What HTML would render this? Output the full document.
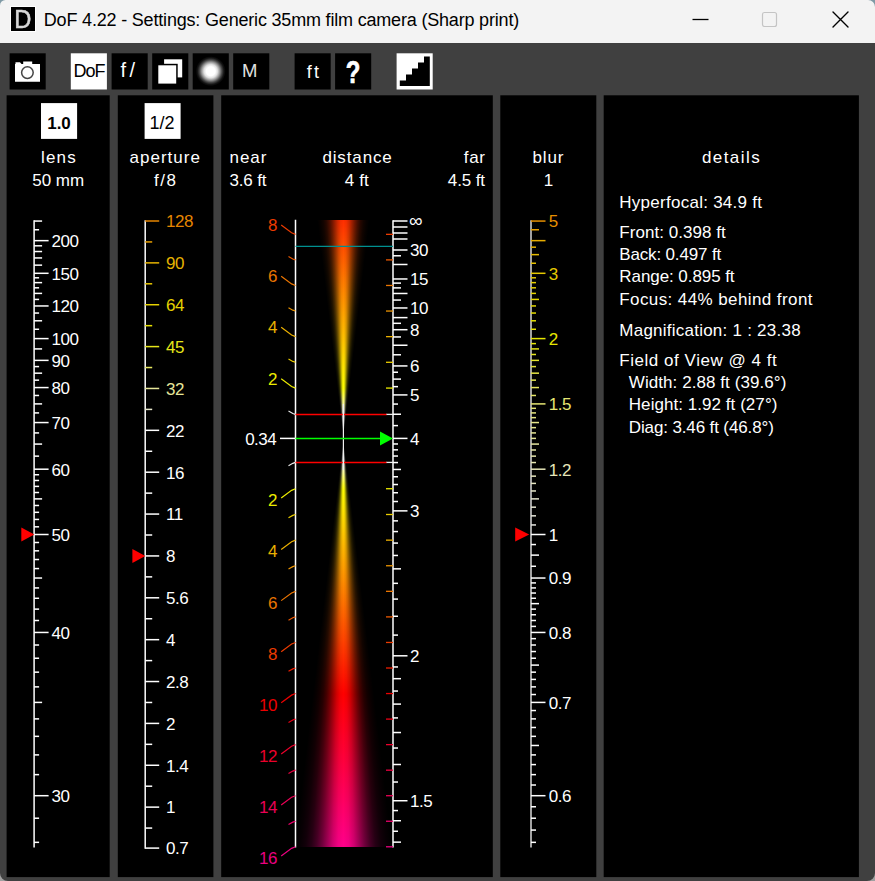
<!DOCTYPE html>
<html><head><meta charset="utf-8"><title>DoF 4.22</title>
<style>
html,body{margin:0;padding:0;background:#404040;}
body{width:875px;height:881px;overflow:hidden;position:relative;font-family:"Liberation Sans", sans-serif;}
#win{position:absolute;left:0;top:0;width:875px;height:881px;background:#404040;overflow:hidden;}
#tb{position:absolute;left:0;top:0;width:875px;height:43px;background:#f3f3f3;}
.pn{position:absolute;top:96px;height:781px;background:#000;}
.bt{position:absolute;top:53px;width:36px;height:36px;background:#000;}
#cone{position:absolute;left:296px;top:220px;width:97px;height:627px;overflow:hidden;}
#cone div{position:absolute;left:0;top:0;width:97px;height:627px;}
svg{position:absolute;left:0;top:0;}
svg text{font-family:"Liberation Sans", sans-serif;font-size:17px;}
svg text.sl{letter-spacing:-0.5px;}
</style></head><body><div id="win">
<div id="tb"></div>
<svg width="875" height="881" viewBox="0 0 875 881">
<rect x="6.6" y="95.3" width="103.1" height="781.8" fill="#000"/>
<rect x="117.8" y="95.3" width="95.6" height="781.8" fill="#000"/>
<rect x="221.2" y="95.3" width="271.6" height="781.8" fill="#000"/>
<rect x="500.3" y="95.3" width="96" height="781.8" fill="#000"/>
<rect x="603.7" y="95.3" width="255.2" height="781.8" fill="#000"/>
<rect x="9.6" y="53.3" width="36.1" height="36.2" fill="#000"/>
<rect x="70.8" y="53.3" width="36.1" height="36.2" fill="#fff"/>
<rect x="111.6" y="53.3" width="36.1" height="36.2" fill="#000"/>
<rect x="152.2" y="53.3" width="36.1" height="36.2" fill="#000"/>
<rect x="192.7" y="53.3" width="36.1" height="36.2" fill="#000"/>
<rect x="233.2" y="53.3" width="36.1" height="36.2" fill="#000"/>
<rect x="294.6" y="53.3" width="36.1" height="36.2" fill="#000"/>
<rect x="335.1" y="53.3" width="36.1" height="36.2" fill="#000"/>
<rect x="396.6" y="53.3" width="36.1" height="36.2" fill="#fff"/>
<rect x="41" y="103.1" width="36.1" height="35.8" fill="#fff"/>
<rect x="144.6" y="103.1" width="36" height="35.8" fill="#fff"/>
</svg>
<div id="cone"><div style="background:linear-gradient(to bottom,#ff2e00 0px,#ff3500 6px,#ff3d00 12px,#ff4400 18px,#ff4c00 24px,#ff5300 30px,#ff5b00 36px,#ff6200 42px,#ff6a00 48px,#ff7100 54px,#ff7900 60px,#ff8000 66px,#ff8800 72px,#ff8f00 78px,#ff9700 84px,#ff9e00 90px,#ffa600 96px,#ffad00 102px,#ffb400 108px,#ffbc00 114px,#ffc300 120px,#ffcb00 126px,#ffd200 132px,#ffda00 138px,#ffe100 144px,#ffe900 150px,#fff000 156px,#fff800 162px,#ffff00 168px,#ffff3a 174px,#ffff75 180px,#ffffaf 186px,#ffffe8 192px,#ffffff 198px,#ffffff 204px,#ffffff 210px,#ffffff 216px,#ffffff 222px,#ffffff 228px,#ffffff 234px,#ffffff 240px,#ffffdd 246px,#ffffa3 252px,#ffff69 258px,#ffff2e 264px,#fffd00 270px,#fff600 276px,#ffef00 282px,#ffe700 288px,#ffe000 294px,#ffd800 300px,#ffd100 306px,#ffc900 312px,#ffc200 318px,#ffba00 324px,#ffb300 330px,#ffac00 336px,#ffa400 342px,#ff9d00 348px,#ff9500 354px,#ff8e00 360px,#ff8600 366px,#ff7f00 372px,#ff7700 378px,#ff7000 384px,#ff6800 390px,#ff6100 396px,#ff5900 402px,#ff5200 408px,#ff4a00 414px,#ff4300 420px,#ff3b00 426px,#ff3400 432px,#ff2c00 438px,#ff2500 444px,#ff1d00 450px,#ff1600 456px,#ff0e00 462px,#ff0700 468px,#ff0000 474px,#ff0006 480px,#ff000b 486px,#ff0011 492px,#ff0016 498px,#ff001c 504px,#ff0021 510px,#ff0027 516px,#ff002c 522px,#ff0031 528px,#ff0037 534px,#ff003c 540px,#ff0042 546px,#ff0047 552px,#ff004d 558px,#ff0052 564px,#ff0058 570px,#ff005d 576px,#ff0062 582px,#ff0068 588px,#ff006d 594px,#ff0073 600px,#ff0078 606px,#ff007e 612px,#ff0083 618px,#ff0089 624px)"></div><div style="background:conic-gradient(from 0deg at 47.4px 218.4px,rgba(0,0,0,0.00) 0.00deg,rgba(0,0,0,0.05) 0.75deg,rgba(0,0,0,0.19) 1.50deg,rgba(0,0,0,0.38) 2.25deg,rgba(0,0,0,0.57) 3.00deg,rgba(0,0,0,0.73) 3.75deg,rgba(0,0,0,0.85) 4.50deg,rgba(0,0,0,0.93) 5.30deg,rgba(0,0,0,0.97) 6.00deg,rgba(0,0,0,1.00) 6.80deg,rgba(0,0,0,1) 173.20deg,rgba(0,0,0,0.97) 174.00deg,rgba(0,0,0,0.93) 174.70deg,rgba(0,0,0,0.85) 175.50deg,rgba(0,0,0,0.73) 176.25deg,rgba(0,0,0,0.57) 177.00deg,rgba(0,0,0,0.38) 177.75deg,rgba(0,0,0,0.19) 178.50deg,rgba(0,0,0,0.05) 179.25deg,rgba(0,0,0,0.00) 180.00deg,rgba(0,0,0,0.05) 180.75deg,rgba(0,0,0,0.19) 181.50deg,rgba(0,0,0,0.38) 182.25deg,rgba(0,0,0,0.57) 183.00deg,rgba(0,0,0,0.73) 183.75deg,rgba(0,0,0,0.85) 184.50deg,rgba(0,0,0,0.93) 185.30deg,rgba(0,0,0,0.97) 186.00deg,rgba(0,0,0,1.00) 186.80deg,rgba(0,0,0,1) 353.20deg,rgba(0,0,0,0.97) 354.00deg,rgba(0,0,0,0.93) 354.70deg,rgba(0,0,0,0.85) 355.50deg,rgba(0,0,0,0.73) 356.25deg,rgba(0,0,0,0.57) 357.00deg,rgba(0,0,0,0.38) 357.75deg,rgba(0,0,0,0.19) 358.50deg,rgba(0,0,0,0.05) 359.25deg,rgba(0,0,0,0.00) 360.00deg)"></div></div>
<svg width="875" height="881" viewBox="0 0 875 881">
<defs><radialGradient id="rg"><stop offset="0" stop-color="#fff"/><stop offset="0.3" stop-color="#fff"/><stop offset="0.45" stop-color="#e0e0e0"/><stop offset="0.6" stop-color="#999"/><stop offset="0.75" stop-color="#484848"/><stop offset="0.88" stop-color="#151515"/><stop offset="1" stop-color="#000"/></radialGradient>
<filter id="bl" x="-20%" y="-20%" width="140%" height="140%"><feGaussianBlur stdDeviation="0.5"/></filter></defs>
<path d="M0 0H5.5A5.5 5.5 0 0 0 0 5.5Z" fill="#7f9aa5"/>
<path d="M875 0H868A7 7 0 0 1 875 7Z" fill="#7f9aa5"/>
<path d="M0 881H8A8 8 0 0 1 0 873Z" fill="#a0a0a0"/>
<path d="M875 881H867A8 8 0 0 0 875 873Z" fill="#a0a0a0"/>
<rect x="10.5" y="6.5" width="25" height="25" fill="#000" stroke="#fff" stroke-width="1"/>
<g transform="translate(22.8 27.9) scale(0.95 1)" filter="url(#bl)"><text x="0" y="0" fill="#d8d8d8" stroke="#d8d8d8" stroke-width="0.5" text-anchor="middle" style="font-size:25px">D</text></g>
<text x="43.8" y="26.2" fill="#000" textLength="475.4" lengthAdjust="spacing" style="font-size:18px">DoF 4.22 - Settings: Generic 35mm film camera (Sharp print)</text>
<line x1="692.5" y1="19.5" x2="708.5" y2="19.5" stroke="#000" stroke-width="1.3"/>
<rect x="762.5" y="12.5" width="14" height="14" rx="2" fill="none" stroke="#c4c4c4" stroke-width="1.2"/>
<path d="M833 12L848 27M848 12L833 27" stroke="#000" stroke-width="1.4" fill="none" stroke-linecap="round"/>
<path d="M15 64H20L22 64H23.2V61.5H32.2V64H40V81.7H15Z" fill="#fff"/>
<path d="M15.5 62.3H20L21.5 64H15.5Z" fill="#fff"/>
<circle cx="27.4" cy="72.6" r="5.8" fill="#fff" stroke="#444" stroke-width="1.5"/>
<text x="89.5" y="77" fill="#000" text-anchor="middle" textLength="32" lengthAdjust="spacing" style="font-size:18px">DoF</text>
<text x="120.6" y="77" fill="#fff" textLength="14.4" lengthAdjust="spacing" style="font-size:20px">f/</text>
<rect x="164.1" y="59.3" width="18.1" height="18.1" fill="#fff"/>
<rect x="156.8" y="63.8" width="20.9" height="21.3" fill="#000"/>
<rect x="158.3" y="65.3" width="17.9" height="18.3" fill="#fff"/>
<circle cx="210.7" cy="71.2" r="15" fill="url(#rg)"/>
<text x="249.6" y="77.3" fill="#e0e0e0" text-anchor="middle" style="font-size:18.5px">M</text>
<text x="306.7" y="78" fill="#fff" textLength="12.3" lengthAdjust="spacing" style="font-size:18px">ft</text>
<g transform="translate(353 83.2) scale(0.76 1)"><text x="0" y="0" fill="#fff" stroke="#fff" stroke-width="0.7" text-anchor="middle" font-weight="bold" style="font-size:31.5px">?</text></g>
<path d="M399.8 86V80.5H406V74.5H412V68.5H418V62.5H424V56.5H429.8V86Z" fill="#000"/>
<text x="59" y="128.5" fill="#000" text-anchor="middle" font-weight="bold">1.0</text>
<text x="162" y="128.5" fill="#000" text-anchor="middle" style="font-size:18px">1/2</text>
<text x="58.3" y="162.7" fill="#ffffff" text-anchor="middle" textLength="34.8" lengthAdjust="spacing">lens</text>
<text x="58.2" y="185.7" fill="#ffffff" text-anchor="middle" textLength="51.8" lengthAdjust="spacing">50 mm</text>
<text x="164.7" y="162.7" fill="#ffffff" text-anchor="middle" textLength="70.4" lengthAdjust="spacing">aperture</text>
<text x="165" y="185.7" fill="#ffffff" text-anchor="middle" textLength="22" lengthAdjust="spacing">f/8</text>
<text x="229.6" y="162.7" fill="#ffffff" textLength="36.8" lengthAdjust="spacing">near</text>
<text x="229.6" y="185.7" fill="#ffffff" textLength="36.8" lengthAdjust="spacing">3.6 ft</text>
<text x="357.1" y="162.7" fill="#ffffff" text-anchor="middle" textLength="69.4" lengthAdjust="spacing">distance</text>
<text x="356.8" y="185.7" fill="#ffffff" text-anchor="middle" textLength="24" lengthAdjust="spacing">4 ft</text>
<text x="485" y="162.7" fill="#ffffff" text-anchor="end" textLength="21.2" lengthAdjust="spacing">far</text>
<text x="485" y="185.7" fill="#ffffff" text-anchor="end" textLength="37.2" lengthAdjust="spacing">4.5 ft</text>
<text x="548" y="162.7" fill="#ffffff" text-anchor="middle" textLength="30.8" lengthAdjust="spacing">blur</text>
<text x="548.4" y="185.7" fill="#ffffff" text-anchor="middle">1</text>
<text x="730.8" y="162.7" fill="#ffffff" text-anchor="middle" textLength="57.7" lengthAdjust="spacing">details</text>
<text x="619.3" y="208.4" fill="#ffffff" textLength="142.7" lengthAdjust="spacing">Hyperfocal: 34.9 ft</text>
<text x="619.3" y="237.5" fill="#ffffff" textLength="106.4" lengthAdjust="spacing">Front: 0.398 ft</text>
<text x="619.3" y="259.8" fill="#ffffff" textLength="101.9" lengthAdjust="spacing">Back: 0.497 ft</text>
<text x="619.3" y="282" fill="#ffffff" textLength="115.3" lengthAdjust="spacing">Range: 0.895 ft</text>
<text x="619.3" y="305.3" fill="#ffffff" textLength="193.2" lengthAdjust="spacing">Focus: 44% behind front</text>
<text x="619.3" y="335.6" fill="#ffffff" textLength="181.3" lengthAdjust="spacing">Magnification: 1 : 23.38</text>
<text x="619.3" y="365.6" fill="#ffffff" textLength="157.5" lengthAdjust="spacing">Field of View @ 4 ft</text>
<text x="628.8" y="387.6" fill="#ffffff" textLength="157.5" lengthAdjust="spacing">Width: 2.88 ft (39.6°)</text>
<text x="628.8" y="409.9" fill="#ffffff" textLength="148.6" lengthAdjust="spacing">Height: 1.92 ft (27°)</text>
<text x="628.8" y="432.5" fill="#ffffff" textLength="145" lengthAdjust="spacing">Diag: 3.46 ft (46.8°)</text>
<line x1="34.1" y1="220.25" x2="34.1" y2="847.5" stroke="#ffffff" stroke-width="1.5"/>
<line x1="34.1" y1="221.06" x2="42.1" y2="221.06" stroke="#ffffff" stroke-width="1.5"/>
<line x1="34.1" y1="229.77" x2="39.1" y2="229.77" stroke="#ffffff" stroke-width="1.5"/>
<line x1="34.1" y1="273.3" x2="48.6" y2="273.3" stroke="#ffffff" stroke-width="1.5"/>
<line x1="34.1" y1="265.14" x2="42.1" y2="265.14" stroke="#ffffff" stroke-width="1.5"/>
<line x1="34.1" y1="257.94" x2="42.1" y2="257.94" stroke="#ffffff" stroke-width="1.5"/>
<line x1="34.1" y1="251.53" x2="42.1" y2="251.53" stroke="#ffffff" stroke-width="1.5"/>
<line x1="34.1" y1="245.81" x2="42.1" y2="245.81" stroke="#ffffff" stroke-width="1.5"/>
<line x1="34.1" y1="240.65" x2="48.6" y2="240.65" stroke="#ffffff" stroke-width="1.5"/>
<line x1="34.1" y1="360.37" x2="48.6" y2="360.37" stroke="#ffffff" stroke-width="1.5"/>
<line x1="34.1" y1="348.91" x2="42.1" y2="348.91" stroke="#ffffff" stroke-width="1.5"/>
<line x1="34.1" y1="338.6" x2="48.6" y2="338.6" stroke="#ffffff" stroke-width="1.5"/>
<line x1="34.1" y1="329.27" x2="39.1" y2="329.27" stroke="#ffffff" stroke-width="1.5"/>
<line x1="34.1" y1="320.79" x2="42.1" y2="320.79" stroke="#ffffff" stroke-width="1.5"/>
<line x1="34.1" y1="313.05" x2="39.1" y2="313.05" stroke="#ffffff" stroke-width="1.5"/>
<line x1="34.1" y1="305.95" x2="48.6" y2="305.95" stroke="#ffffff" stroke-width="1.5"/>
<line x1="34.1" y1="299.42" x2="39.1" y2="299.42" stroke="#ffffff" stroke-width="1.5"/>
<line x1="34.1" y1="293.39" x2="42.1" y2="293.39" stroke="#ffffff" stroke-width="1.5"/>
<line x1="34.1" y1="287.81" x2="39.1" y2="287.81" stroke="#ffffff" stroke-width="1.5"/>
<line x1="34.1" y1="282.63" x2="42.1" y2="282.63" stroke="#ffffff" stroke-width="1.5"/>
<line x1="34.1" y1="277.8" x2="39.1" y2="277.8" stroke="#ffffff" stroke-width="1.5"/>
<line x1="34.1" y1="469.2" x2="48.6" y2="469.2" stroke="#ffffff" stroke-width="1.5"/>
<line x1="34.1" y1="456.14" x2="39.1" y2="456.14" stroke="#ffffff" stroke-width="1.5"/>
<line x1="34.1" y1="444.08" x2="42.1" y2="444.08" stroke="#ffffff" stroke-width="1.5"/>
<line x1="34.1" y1="432.92" x2="39.1" y2="432.92" stroke="#ffffff" stroke-width="1.5"/>
<line x1="34.1" y1="422.56" x2="48.6" y2="422.56" stroke="#ffffff" stroke-width="1.5"/>
<line x1="34.1" y1="412.91" x2="39.1" y2="412.91" stroke="#ffffff" stroke-width="1.5"/>
<line x1="34.1" y1="403.9" x2="42.1" y2="403.9" stroke="#ffffff" stroke-width="1.5"/>
<line x1="34.1" y1="395.47" x2="39.1" y2="395.47" stroke="#ffffff" stroke-width="1.5"/>
<line x1="34.1" y1="387.57" x2="48.6" y2="387.57" stroke="#ffffff" stroke-width="1.5"/>
<line x1="34.1" y1="380.15" x2="39.1" y2="380.15" stroke="#ffffff" stroke-width="1.5"/>
<line x1="34.1" y1="373.17" x2="42.1" y2="373.17" stroke="#ffffff" stroke-width="1.5"/>
<line x1="34.1" y1="366.59" x2="39.1" y2="366.59" stroke="#ffffff" stroke-width="1.5"/>
<line x1="34.1" y1="842.34" x2="39.1" y2="842.34" stroke="#ffffff" stroke-width="1.5"/>
<line x1="34.1" y1="818.22" x2="39.1" y2="818.22" stroke="#ffffff" stroke-width="1.5"/>
<line x1="34.1" y1="795.7" x2="48.6" y2="795.7" stroke="#ffffff" stroke-width="1.5"/>
<line x1="34.1" y1="774.64" x2="39.1" y2="774.64" stroke="#ffffff" stroke-width="1.5"/>
<line x1="34.1" y1="754.89" x2="39.1" y2="754.89" stroke="#ffffff" stroke-width="1.5"/>
<line x1="34.1" y1="736.34" x2="39.1" y2="736.34" stroke="#ffffff" stroke-width="1.5"/>
<line x1="34.1" y1="718.88" x2="39.1" y2="718.88" stroke="#ffffff" stroke-width="1.5"/>
<line x1="34.1" y1="702.41" x2="42.1" y2="702.41" stroke="#ffffff" stroke-width="1.5"/>
<line x1="34.1" y1="686.87" x2="39.1" y2="686.87" stroke="#ffffff" stroke-width="1.5"/>
<line x1="34.1" y1="672.16" x2="39.1" y2="672.16" stroke="#ffffff" stroke-width="1.5"/>
<line x1="34.1" y1="658.23" x2="39.1" y2="658.23" stroke="#ffffff" stroke-width="1.5"/>
<line x1="34.1" y1="645.01" x2="39.1" y2="645.01" stroke="#ffffff" stroke-width="1.5"/>
<line x1="34.1" y1="632.45" x2="48.6" y2="632.45" stroke="#ffffff" stroke-width="1.5"/>
<line x1="34.1" y1="620.5" x2="39.1" y2="620.5" stroke="#ffffff" stroke-width="1.5"/>
<line x1="34.1" y1="609.13" x2="39.1" y2="609.13" stroke="#ffffff" stroke-width="1.5"/>
<line x1="34.1" y1="598.28" x2="39.1" y2="598.28" stroke="#ffffff" stroke-width="1.5"/>
<line x1="34.1" y1="587.93" x2="39.1" y2="587.93" stroke="#ffffff" stroke-width="1.5"/>
<line x1="34.1" y1="578.03" x2="42.1" y2="578.03" stroke="#ffffff" stroke-width="1.5"/>
<line x1="34.1" y1="568.57" x2="39.1" y2="568.57" stroke="#ffffff" stroke-width="1.5"/>
<line x1="34.1" y1="559.51" x2="39.1" y2="559.51" stroke="#ffffff" stroke-width="1.5"/>
<line x1="34.1" y1="550.83" x2="39.1" y2="550.83" stroke="#ffffff" stroke-width="1.5"/>
<line x1="34.1" y1="542.5" x2="39.1" y2="542.5" stroke="#ffffff" stroke-width="1.5"/>
<line x1="34.1" y1="534.5" x2="48.6" y2="534.5" stroke="#ffffff" stroke-width="1.5"/>
<line x1="34.1" y1="526.82" x2="39.1" y2="526.82" stroke="#ffffff" stroke-width="1.5"/>
<line x1="34.1" y1="519.43" x2="39.1" y2="519.43" stroke="#ffffff" stroke-width="1.5"/>
<line x1="34.1" y1="512.32" x2="39.1" y2="512.32" stroke="#ffffff" stroke-width="1.5"/>
<line x1="34.1" y1="505.48" x2="39.1" y2="505.48" stroke="#ffffff" stroke-width="1.5"/>
<line x1="34.1" y1="498.88" x2="42.1" y2="498.88" stroke="#ffffff" stroke-width="1.5"/>
<line x1="34.1" y1="492.52" x2="39.1" y2="492.52" stroke="#ffffff" stroke-width="1.5"/>
<line x1="34.1" y1="486.38" x2="39.1" y2="486.38" stroke="#ffffff" stroke-width="1.5"/>
<line x1="34.1" y1="480.46" x2="39.1" y2="480.46" stroke="#ffffff" stroke-width="1.5"/>
<line x1="34.1" y1="474.73" x2="39.1" y2="474.73" stroke="#ffffff" stroke-width="1.5"/>
<text x="51.5" y="246.95" fill="#ffffff" class="sl">200</text>
<text x="51.5" y="279.6" fill="#ffffff" class="sl">150</text>
<text x="51.5" y="312.25" fill="#ffffff" class="sl">120</text>
<text x="51.5" y="344.9" fill="#ffffff" class="sl">100</text>
<text x="51.5" y="366.67" fill="#ffffff" class="sl">90</text>
<text x="51.5" y="393.88" fill="#ffffff" class="sl">80</text>
<text x="51.5" y="428.86" fill="#ffffff" class="sl">70</text>
<text x="51.5" y="475.5" fill="#ffffff" class="sl">60</text>
<text x="51.5" y="540.8" fill="#ffffff" class="sl">50</text>
<text x="51.5" y="638.75" fill="#ffffff" class="sl">40</text>
<text x="51.5" y="802" fill="#ffffff" class="sl">30</text>
<path d="M21.3 527.6L34.3 534.5L21.3 541.4Z" fill="#f00"/>
<line x1="145.2" y1="220.25" x2="145.2" y2="848.8" stroke="#ffffff" stroke-width="1.5"/>
<line x1="145.2" y1="221" x2="159.2" y2="221" stroke="#e68600" stroke-width="1.5"/>
<text x="166" y="227.3" fill="#e68600" class="sl">128</text>
<line x1="145.2" y1="241.93" x2="152.2" y2="241.93" stroke="#e69e00" stroke-width="1.5"/>
<line x1="145.2" y1="262.87" x2="159.2" y2="262.87" stroke="#e6b300" stroke-width="1.5"/>
<text x="166" y="269.17" fill="#e6b300" class="sl">90</text>
<line x1="145.2" y1="283.8" x2="152.2" y2="283.8" stroke="#e6c400" stroke-width="1.5"/>
<line x1="145.2" y1="304.73" x2="159.2" y2="304.73" stroke="#e6d200" stroke-width="1.5"/>
<text x="166" y="311.03" fill="#e6d200" class="sl">64</text>
<line x1="145.2" y1="325.67" x2="152.2" y2="325.67" stroke="#e6df00" stroke-width="1.5"/>
<line x1="145.2" y1="346.6" x2="159.2" y2="346.6" stroke="#e6e61a" stroke-width="1.5"/>
<text x="166" y="352.9" fill="#e6e61a" class="sl">45</text>
<line x1="145.2" y1="367.53" x2="152.2" y2="367.53" stroke="#e6e65f" stroke-width="1.5"/>
<line x1="145.2" y1="388.47" x2="159.2" y2="388.47" stroke="#e6e699" stroke-width="1.5"/>
<text x="166" y="394.77" fill="#e6e699" class="sl">32</text>
<line x1="145.2" y1="409.4" x2="152.2" y2="409.4" stroke="#e6e6ca" stroke-width="1.5"/>
<line x1="145.2" y1="430.33" x2="159.2" y2="430.33" stroke="#ffffff" stroke-width="1.5"/>
<text x="166" y="436.63" fill="#ffffff" class="sl">22</text>
<line x1="145.2" y1="451.27" x2="152.2" y2="451.27" stroke="#ffffff" stroke-width="1.5"/>
<line x1="145.2" y1="472.2" x2="159.2" y2="472.2" stroke="#ffffff" stroke-width="1.5"/>
<text x="166" y="478.5" fill="#ffffff" class="sl">16</text>
<line x1="145.2" y1="493.13" x2="152.2" y2="493.13" stroke="#ffffff" stroke-width="1.5"/>
<line x1="145.2" y1="514.07" x2="159.2" y2="514.07" stroke="#ffffff" stroke-width="1.5"/>
<text x="166" y="520.37" fill="#ffffff" class="sl">11</text>
<line x1="145.2" y1="535" x2="152.2" y2="535" stroke="#ffffff" stroke-width="1.5"/>
<line x1="145.2" y1="555.93" x2="159.2" y2="555.93" stroke="#ffffff" stroke-width="1.5"/>
<text x="166" y="562.23" fill="#ffffff" class="sl">8</text>
<line x1="145.2" y1="576.87" x2="152.2" y2="576.87" stroke="#ffffff" stroke-width="1.5"/>
<line x1="145.2" y1="597.8" x2="159.2" y2="597.8" stroke="#ffffff" stroke-width="1.5"/>
<text x="166" y="604.1" fill="#ffffff" class="sl">5.6</text>
<line x1="145.2" y1="618.73" x2="152.2" y2="618.73" stroke="#ffffff" stroke-width="1.5"/>
<line x1="145.2" y1="639.67" x2="159.2" y2="639.67" stroke="#ffffff" stroke-width="1.5"/>
<text x="166" y="645.97" fill="#ffffff" class="sl">4</text>
<line x1="145.2" y1="660.6" x2="152.2" y2="660.6" stroke="#ffffff" stroke-width="1.5"/>
<line x1="145.2" y1="681.53" x2="159.2" y2="681.53" stroke="#ffffff" stroke-width="1.5"/>
<text x="166" y="687.83" fill="#ffffff" class="sl">2.8</text>
<line x1="145.2" y1="702.47" x2="152.2" y2="702.47" stroke="#ffffff" stroke-width="1.5"/>
<line x1="145.2" y1="723.4" x2="159.2" y2="723.4" stroke="#ffffff" stroke-width="1.5"/>
<text x="166" y="729.7" fill="#ffffff" class="sl">2</text>
<line x1="145.2" y1="744.33" x2="152.2" y2="744.33" stroke="#ffffff" stroke-width="1.5"/>
<line x1="145.2" y1="765.27" x2="159.2" y2="765.27" stroke="#ffffff" stroke-width="1.5"/>
<text x="166" y="771.57" fill="#ffffff" class="sl">1.4</text>
<line x1="145.2" y1="786.2" x2="152.2" y2="786.2" stroke="#ffffff" stroke-width="1.5"/>
<line x1="145.2" y1="807.13" x2="159.2" y2="807.13" stroke="#ffffff" stroke-width="1.5"/>
<text x="166" y="813.43" fill="#ffffff" class="sl">1</text>
<line x1="145.2" y1="828.07" x2="152.2" y2="828.07" stroke="#ffffff" stroke-width="1.5"/>
<line x1="145.2" y1="848.1" x2="159.2" y2="848.1" stroke="#ffffff" stroke-width="1.5"/>
<text x="166" y="854.4" fill="#ffffff" class="sl">0.7</text>
<path d="M132.4 549.1L145.3 556L132.4 562.9Z" fill="#f00"/>
<line x1="531" y1="220.25" x2="531" y2="847.5" stroke="#d8d8d8" stroke-width="1.5"/>
<line x1="531" y1="229.77" x2="539" y2="229.77" stroke="#e69e00" stroke-width="1.5"/>
<line x1="531" y1="247.18" x2="536" y2="247.18" stroke="#e6b300" stroke-width="1.5"/>
<line x1="531" y1="254.64" x2="539" y2="254.64" stroke="#e6ba00" stroke-width="1.5"/>
<line x1="531" y1="263.25" x2="536" y2="263.25" stroke="#e6c200" stroke-width="1.5"/>
<line x1="531" y1="240.65" x2="545.5" y2="240.65" stroke="#e6ac00" stroke-width="1.5"/>
<line x1="531" y1="338.6" x2="545.5" y2="338.6" stroke="#e6e600" stroke-width="1.5"/>
<line x1="531" y1="329.27" x2="536" y2="329.27" stroke="#e6e300" stroke-width="1.5"/>
<line x1="531" y1="320.79" x2="536" y2="320.79" stroke="#e6e000" stroke-width="1.5"/>
<line x1="531" y1="313.05" x2="536" y2="313.05" stroke="#e6dd00" stroke-width="1.5"/>
<line x1="531" y1="305.95" x2="536" y2="305.95" stroke="#e6da00" stroke-width="1.5"/>
<line x1="531" y1="299.42" x2="539" y2="299.42" stroke="#e6d700" stroke-width="1.5"/>
<line x1="531" y1="293.39" x2="536" y2="293.39" stroke="#e6d400" stroke-width="1.5"/>
<line x1="531" y1="287.81" x2="536" y2="287.81" stroke="#e6d100" stroke-width="1.5"/>
<line x1="531" y1="282.63" x2="536" y2="282.63" stroke="#e6cf00" stroke-width="1.5"/>
<line x1="531" y1="277.8" x2="536" y2="277.8" stroke="#e6cc00" stroke-width="1.5"/>
<line x1="531" y1="273.3" x2="545.5" y2="273.3" stroke="#e6c900" stroke-width="1.5"/>
<line x1="531" y1="403.9" x2="545.5" y2="403.9" stroke="#e6e673" stroke-width="1.5"/>
<line x1="531" y1="395.47" x2="536" y2="395.47" stroke="#e6e667" stroke-width="1.5"/>
<line x1="531" y1="387.57" x2="539" y2="387.57" stroke="#e6e65c" stroke-width="1.5"/>
<line x1="531" y1="380.15" x2="536" y2="380.15" stroke="#e6e650" stroke-width="1.5"/>
<line x1="531" y1="373.17" x2="539" y2="373.17" stroke="#e6e645" stroke-width="1.5"/>
<line x1="531" y1="366.59" x2="536" y2="366.59" stroke="#e6e639" stroke-width="1.5"/>
<line x1="531" y1="360.37" x2="539" y2="360.37" stroke="#e6e62e" stroke-width="1.5"/>
<line x1="531" y1="354.48" x2="536" y2="354.48" stroke="#e6e622" stroke-width="1.5"/>
<line x1="531" y1="348.91" x2="539" y2="348.91" stroke="#e6e617" stroke-width="1.5"/>
<line x1="531" y1="343.62" x2="536" y2="343.62" stroke="#e6e60b" stroke-width="1.5"/>
<line x1="531" y1="534.5" x2="545.5" y2="534.5" stroke="#ffffff" stroke-width="1.5"/>
<line x1="531" y1="524.94" x2="536" y2="524.94" stroke="#e6e6e0" stroke-width="1.5"/>
<line x1="531" y1="515.84" x2="536" y2="515.84" stroke="#e6e6da" stroke-width="1.5"/>
<line x1="531" y1="507.17" x2="536" y2="507.17" stroke="#e6e6d4" stroke-width="1.5"/>
<line x1="531" y1="498.88" x2="539" y2="498.88" stroke="#e6e6cf" stroke-width="1.5"/>
<line x1="531" y1="490.97" x2="536" y2="490.97" stroke="#e6e6c9" stroke-width="1.5"/>
<line x1="531" y1="483.4" x2="536" y2="483.4" stroke="#e6e6c3" stroke-width="1.5"/>
<line x1="531" y1="476.15" x2="536" y2="476.15" stroke="#e6e6bd" stroke-width="1.5"/>
<line x1="531" y1="469.2" x2="545.5" y2="469.2" stroke="#e6e6b8" stroke-width="1.5"/>
<line x1="531" y1="462.54" x2="536" y2="462.54" stroke="#e6e6b2" stroke-width="1.5"/>
<line x1="531" y1="456.14" x2="536" y2="456.14" stroke="#e6e6ac" stroke-width="1.5"/>
<line x1="531" y1="449.99" x2="536" y2="449.99" stroke="#e6e6a6" stroke-width="1.5"/>
<line x1="531" y1="444.08" x2="539" y2="444.08" stroke="#e6e6a1" stroke-width="1.5"/>
<line x1="531" y1="438.4" x2="536" y2="438.4" stroke="#e6e69b" stroke-width="1.5"/>
<line x1="531" y1="432.92" x2="536" y2="432.92" stroke="#e6e695" stroke-width="1.5"/>
<line x1="531" y1="427.65" x2="536" y2="427.65" stroke="#e6e68f" stroke-width="1.5"/>
<line x1="531" y1="422.56" x2="539" y2="422.56" stroke="#e6e68a" stroke-width="1.5"/>
<line x1="531" y1="417.65" x2="536" y2="417.65" stroke="#e6e684" stroke-width="1.5"/>
<line x1="531" y1="412.91" x2="536" y2="412.91" stroke="#e6e67e" stroke-width="1.5"/>
<line x1="531" y1="408.33" x2="536" y2="408.33" stroke="#e6e678" stroke-width="1.5"/>
<line x1="531" y1="578.03" x2="545.5" y2="578.03" stroke="#ffffff" stroke-width="1.5"/>
<line x1="531" y1="566.27" x2="536" y2="566.27" stroke="#ffffff" stroke-width="1.5"/>
<line x1="531" y1="555.12" x2="539" y2="555.12" stroke="#ffffff" stroke-width="1.5"/>
<line x1="531" y1="544.55" x2="536" y2="544.55" stroke="#ffffff" stroke-width="1.5"/>
<line x1="531" y1="842.34" x2="536" y2="842.34" stroke="#ffffff" stroke-width="1.5"/>
<line x1="531" y1="830.07" x2="536" y2="830.07" stroke="#ffffff" stroke-width="1.5"/>
<line x1="531" y1="818.22" x2="536" y2="818.22" stroke="#ffffff" stroke-width="1.5"/>
<line x1="531" y1="806.77" x2="536" y2="806.77" stroke="#ffffff" stroke-width="1.5"/>
<line x1="531" y1="795.7" x2="545.5" y2="795.7" stroke="#ffffff" stroke-width="1.5"/>
<line x1="531" y1="785" x2="536" y2="785" stroke="#ffffff" stroke-width="1.5"/>
<line x1="531" y1="774.64" x2="536" y2="774.64" stroke="#ffffff" stroke-width="1.5"/>
<line x1="531" y1="764.6" x2="536" y2="764.6" stroke="#ffffff" stroke-width="1.5"/>
<line x1="531" y1="754.89" x2="536" y2="754.89" stroke="#ffffff" stroke-width="1.5"/>
<line x1="531" y1="745.47" x2="539" y2="745.47" stroke="#ffffff" stroke-width="1.5"/>
<line x1="531" y1="736.34" x2="536" y2="736.34" stroke="#ffffff" stroke-width="1.5"/>
<line x1="531" y1="727.48" x2="536" y2="727.48" stroke="#ffffff" stroke-width="1.5"/>
<line x1="531" y1="718.88" x2="536" y2="718.88" stroke="#ffffff" stroke-width="1.5"/>
<line x1="531" y1="710.53" x2="536" y2="710.53" stroke="#ffffff" stroke-width="1.5"/>
<line x1="531" y1="702.41" x2="545.5" y2="702.41" stroke="#ffffff" stroke-width="1.5"/>
<line x1="531" y1="694.53" x2="536" y2="694.53" stroke="#ffffff" stroke-width="1.5"/>
<line x1="531" y1="686.87" x2="536" y2="686.87" stroke="#ffffff" stroke-width="1.5"/>
<line x1="531" y1="679.41" x2="536" y2="679.41" stroke="#ffffff" stroke-width="1.5"/>
<line x1="531" y1="672.16" x2="536" y2="672.16" stroke="#ffffff" stroke-width="1.5"/>
<line x1="531" y1="665.1" x2="539" y2="665.1" stroke="#ffffff" stroke-width="1.5"/>
<line x1="531" y1="658.23" x2="536" y2="658.23" stroke="#ffffff" stroke-width="1.5"/>
<line x1="531" y1="651.53" x2="536" y2="651.53" stroke="#ffffff" stroke-width="1.5"/>
<line x1="531" y1="645.01" x2="536" y2="645.01" stroke="#ffffff" stroke-width="1.5"/>
<line x1="531" y1="638.65" x2="536" y2="638.65" stroke="#ffffff" stroke-width="1.5"/>
<line x1="531" y1="632.45" x2="545.5" y2="632.45" stroke="#ffffff" stroke-width="1.5"/>
<line x1="531" y1="626.4" x2="536" y2="626.4" stroke="#ffffff" stroke-width="1.5"/>
<line x1="531" y1="620.5" x2="536" y2="620.5" stroke="#ffffff" stroke-width="1.5"/>
<line x1="531" y1="614.75" x2="536" y2="614.75" stroke="#ffffff" stroke-width="1.5"/>
<line x1="531" y1="609.13" x2="536" y2="609.13" stroke="#ffffff" stroke-width="1.5"/>
<line x1="531" y1="603.64" x2="539" y2="603.64" stroke="#ffffff" stroke-width="1.5"/>
<line x1="531" y1="598.28" x2="536" y2="598.28" stroke="#ffffff" stroke-width="1.5"/>
<line x1="531" y1="593.04" x2="536" y2="593.04" stroke="#ffffff" stroke-width="1.5"/>
<line x1="531" y1="587.93" x2="536" y2="587.93" stroke="#ffffff" stroke-width="1.5"/>
<line x1="531" y1="582.92" x2="536" y2="582.92" stroke="#ffffff" stroke-width="1.5"/>
<line x1="531" y1="221.06" x2="545.5" y2="221.06" stroke="#e68f00" stroke-width="1.5"/>
<text x="548.8" y="227.36" fill="#e68f00" class="sl">5</text>
<text x="548.8" y="279.6" fill="#e6c900" class="sl">3</text>
<text x="548.8" y="344.9" fill="#e6e600" class="sl">2</text>
<text x="548.8" y="410.2" fill="#e6e673" class="sl">1.5</text>
<text x="548.8" y="475.5" fill="#e6e6b8" class="sl">1.2</text>
<text x="548.8" y="540.8" fill="#ffffff" class="sl">1</text>
<text x="548.8" y="584.33" fill="#ffffff" class="sl">0.9</text>
<text x="548.8" y="638.75" fill="#ffffff" class="sl">0.8</text>
<text x="548.8" y="708.71" fill="#ffffff" class="sl">0.7</text>
<text x="548.8" y="802" fill="#ffffff" class="sl">0.6</text>
<path d="M515.2 527.6L529.2 534.5L515.2 541.4Z" fill="#f00"/>
<line x1="393" y1="220.25" x2="393" y2="847.5" stroke="#ffffff" stroke-width="1.5"/>
<line x1="393" y1="221" x2="407.5" y2="221" stroke="#ffffff" stroke-width="1.5"/>
<line x1="393" y1="227" x2="407.5" y2="227" stroke="#ffffff" stroke-width="1.5"/>
<line x1="393" y1="233" x2="407.5" y2="233" stroke="#ffffff" stroke-width="1.5"/>
<line x1="393" y1="239" x2="407.5" y2="239" stroke="#ffffff" stroke-width="1.5"/>
<line x1="393" y1="249.99" x2="407.5" y2="249.99" stroke="#ffffff" stroke-width="1.5"/>
<line x1="393" y1="264.48" x2="407.5" y2="264.48" stroke="#ffffff" stroke-width="1.5"/>
<line x1="393" y1="278.97" x2="407.5" y2="278.97" stroke="#ffffff" stroke-width="1.5"/>
<line x1="393" y1="293.47" x2="407.5" y2="293.47" stroke="#ffffff" stroke-width="1.5"/>
<line x1="393" y1="307.96" x2="407.5" y2="307.96" stroke="#ffffff" stroke-width="1.5"/>
<line x1="393" y1="317.62" x2="407.5" y2="317.62" stroke="#ffffff" stroke-width="1.5"/>
<line x1="393" y1="329.7" x2="407.5" y2="329.7" stroke="#ffffff" stroke-width="1.5"/>
<line x1="393" y1="345.23" x2="407.5" y2="345.23" stroke="#ffffff" stroke-width="1.5"/>
<line x1="393" y1="365.93" x2="407.5" y2="365.93" stroke="#ffffff" stroke-width="1.5"/>
<line x1="393" y1="394.92" x2="407.5" y2="394.92" stroke="#ffffff" stroke-width="1.5"/>
<line x1="393" y1="438.4" x2="407.5" y2="438.4" stroke="#ffffff" stroke-width="1.5"/>
<line x1="393" y1="510.87" x2="407.5" y2="510.87" stroke="#ffffff" stroke-width="1.5"/>
<line x1="393" y1="655.8" x2="407.5" y2="655.8" stroke="#ffffff" stroke-width="1.5"/>
<line x1="393" y1="800.73" x2="407.5" y2="800.73" stroke="#ffffff" stroke-width="1.5"/>
<line x1="393" y1="255.78" x2="401" y2="255.78" stroke="#ffffff" stroke-width="1.5"/>
<line x1="393" y1="283.11" x2="401" y2="283.11" stroke="#ffffff" stroke-width="1.5"/>
<line x1="393" y1="287.89" x2="401" y2="287.89" stroke="#ffffff" stroke-width="1.5"/>
<line x1="393" y1="300.05" x2="401" y2="300.05" stroke="#ffffff" stroke-width="1.5"/>
<line x1="393" y1="323.31" x2="401" y2="323.31" stroke="#ffffff" stroke-width="1.5"/>
<line x1="393" y1="336.95" x2="401" y2="336.95" stroke="#ffffff" stroke-width="1.5"/>
<line x1="393" y1="354.78" x2="401" y2="354.78" stroke="#ffffff" stroke-width="1.5"/>
<line x1="393" y1="425.61" x2="398" y2="425.61" stroke="#ffffff" stroke-width="1.5"/>
<line x1="393" y1="414.24" x2="401" y2="414.24" stroke="#ffffff" stroke-width="1.5"/>
<line x1="393" y1="404.07" x2="398" y2="404.07" stroke="#ffffff" stroke-width="1.5"/>
<line x1="393" y1="386.64" x2="398" y2="386.64" stroke="#ffffff" stroke-width="1.5"/>
<line x1="393" y1="379.11" x2="401" y2="379.11" stroke="#ffffff" stroke-width="1.5"/>
<line x1="393" y1="372.23" x2="398" y2="372.23" stroke="#ffffff" stroke-width="1.5"/>
<line x1="393" y1="635.1" x2="398" y2="635.1" stroke="#ffffff" stroke-width="1.5"/>
<line x1="393" y1="616.27" x2="398" y2="616.27" stroke="#ffffff" stroke-width="1.5"/>
<line x1="393" y1="599.09" x2="398" y2="599.09" stroke="#ffffff" stroke-width="1.5"/>
<line x1="393" y1="583.33" x2="398" y2="583.33" stroke="#ffffff" stroke-width="1.5"/>
<line x1="393" y1="568.84" x2="401" y2="568.84" stroke="#ffffff" stroke-width="1.5"/>
<line x1="393" y1="555.46" x2="398" y2="555.46" stroke="#ffffff" stroke-width="1.5"/>
<line x1="393" y1="543.07" x2="398" y2="543.07" stroke="#ffffff" stroke-width="1.5"/>
<line x1="393" y1="531.57" x2="398" y2="531.57" stroke="#ffffff" stroke-width="1.5"/>
<line x1="393" y1="520.86" x2="398" y2="520.86" stroke="#ffffff" stroke-width="1.5"/>
<line x1="393" y1="501.52" x2="398" y2="501.52" stroke="#ffffff" stroke-width="1.5"/>
<line x1="393" y1="492.75" x2="398" y2="492.75" stroke="#ffffff" stroke-width="1.5"/>
<line x1="393" y1="484.52" x2="398" y2="484.52" stroke="#ffffff" stroke-width="1.5"/>
<line x1="393" y1="476.76" x2="398" y2="476.76" stroke="#ffffff" stroke-width="1.5"/>
<line x1="393" y1="469.46" x2="401" y2="469.46" stroke="#ffffff" stroke-width="1.5"/>
<line x1="393" y1="462.56" x2="398" y2="462.56" stroke="#ffffff" stroke-width="1.5"/>
<line x1="393" y1="456.03" x2="398" y2="456.03" stroke="#ffffff" stroke-width="1.5"/>
<line x1="393" y1="449.84" x2="398" y2="449.84" stroke="#ffffff" stroke-width="1.5"/>
<line x1="393" y1="443.97" x2="398" y2="443.97" stroke="#ffffff" stroke-width="1.5"/>
<line x1="393" y1="782.03" x2="398" y2="782.03" stroke="#ffffff" stroke-width="1.5"/>
<line x1="393" y1="764.5" x2="401" y2="764.5" stroke="#ffffff" stroke-width="1.5"/>
<line x1="393" y1="748.03" x2="398" y2="748.03" stroke="#ffffff" stroke-width="1.5"/>
<line x1="393" y1="732.53" x2="401" y2="732.53" stroke="#ffffff" stroke-width="1.5"/>
<line x1="393" y1="717.91" x2="398" y2="717.91" stroke="#ffffff" stroke-width="1.5"/>
<line x1="393" y1="704.11" x2="401" y2="704.11" stroke="#ffffff" stroke-width="1.5"/>
<line x1="393" y1="691.05" x2="398" y2="691.05" stroke="#ffffff" stroke-width="1.5"/>
<line x1="393" y1="678.68" x2="401" y2="678.68" stroke="#ffffff" stroke-width="1.5"/>
<line x1="393" y1="666.95" x2="398" y2="666.95" stroke="#ffffff" stroke-width="1.5"/>
<line x1="393" y1="842.14" x2="401" y2="842.14" stroke="#ffffff" stroke-width="1.5"/>
<line x1="393" y1="831.25" x2="398" y2="831.25" stroke="#ffffff" stroke-width="1.5"/>
<line x1="393" y1="820.72" x2="401" y2="820.72" stroke="#ffffff" stroke-width="1.5"/>
<line x1="393" y1="810.56" x2="398" y2="810.56" stroke="#ffffff" stroke-width="1.5"/>
<text x="410" y="256.29" fill="#ffffff" class="sl">30</text>
<text x="410" y="285.27" fill="#ffffff" class="sl">15</text>
<text x="410" y="314.26" fill="#ffffff" class="sl">10</text>
<text x="410" y="336" fill="#ffffff" class="sl">8</text>
<text x="410" y="372.23" fill="#ffffff" class="sl">6</text>
<text x="410" y="401.22" fill="#ffffff" class="sl">5</text>
<text x="410" y="444.7" fill="#ffffff" class="sl">4</text>
<text x="410" y="517.17" fill="#ffffff" class="sl">3</text>
<text x="410" y="662.1" fill="#ffffff" class="sl">2</text>
<text x="410" y="807.03" fill="#ffffff" class="sl">1.5</text>
<text x="409" y="227" fill="#ffffff" style="font-size:19px">∞</text>
<line x1="295.5" y1="219.75" x2="295.5" y2="847.5" stroke="#ffffff" stroke-width="1.5"/>
<line x1="386" y1="414.39" x2="393" y2="414.39" stroke="#ebebeb" stroke-width="1.3"/>
<path d="M288.5 411.09 L292.8 413.49 L295.5 414.39" fill="none" stroke="#ebebeb" stroke-width="1.2"/>
<line x1="386" y1="388.08" x2="393" y2="388.08" stroke="#ebeb00" stroke-width="1.3"/>
<path d="M281.2 378.78 L291.6 386.48 L295.5 388.08" fill="none" stroke="#ebeb00" stroke-width="1.2"/>
<text x="277" y="384.68" fill="#ebeb00" class="sl" text-anchor="end">2</text>
<line x1="386" y1="362.3" x2="393" y2="362.3" stroke="#ebcd00" stroke-width="1.3"/>
<path d="M288.5 359 L292.8 361.4 L295.5 362.3" fill="none" stroke="#ebcd00" stroke-width="1.2"/>
<line x1="386" y1="336.65" x2="393" y2="336.65" stroke="#ebb000" stroke-width="1.3"/>
<path d="M281.2 327.35 L291.6 335.05 L295.5 336.65" fill="none" stroke="#ebb000" stroke-width="1.2"/>
<text x="277" y="333.25" fill="#ebb000" class="sl" text-anchor="end">4</text>
<line x1="386" y1="311.05" x2="393" y2="311.05" stroke="#eb9300" stroke-width="1.3"/>
<path d="M288.5 307.75 L292.8 310.15 L295.5 311.05" fill="none" stroke="#eb9300" stroke-width="1.2"/>
<line x1="386" y1="285.47" x2="393" y2="285.47" stroke="#eb7500" stroke-width="1.3"/>
<path d="M281.2 276.17 L291.6 283.87 L295.5 285.47" fill="none" stroke="#eb7500" stroke-width="1.2"/>
<text x="277" y="282.07" fill="#eb7500" class="sl" text-anchor="end">6</text>
<line x1="386" y1="259.9" x2="393" y2="259.9" stroke="#eb5800" stroke-width="1.3"/>
<path d="M288.5 256.6 L292.8 259 L295.5 259.9" fill="none" stroke="#eb5800" stroke-width="1.2"/>
<line x1="386" y1="234.34" x2="393" y2="234.34" stroke="#eb3b00" stroke-width="1.3"/>
<path d="M281.2 225.04 L291.6 232.74 L295.5 234.34" fill="none" stroke="#eb3b00" stroke-width="1.2"/>
<text x="277" y="230.94" fill="#eb3b00" class="sl" text-anchor="end">8</text>
<line x1="386" y1="462.41" x2="393" y2="462.41" stroke="#ebebeb" stroke-width="1.3"/>
<path d="M288.5 465.71 L292.8 463.31 L295.5 462.41" fill="none" stroke="#ebebeb" stroke-width="1.2"/>
<line x1="386" y1="488.72" x2="393" y2="488.72" stroke="#ebeb00" stroke-width="1.3"/>
<path d="M281.2 498.02 L291.6 490.32 L295.5 488.72" fill="none" stroke="#ebeb00" stroke-width="1.2"/>
<text x="277" y="505.92" fill="#ebeb00" class="sl" text-anchor="end">2</text>
<line x1="386" y1="514.5" x2="393" y2="514.5" stroke="#ebcd00" stroke-width="1.3"/>
<path d="M288.5 517.8 L292.8 515.4 L295.5 514.5" fill="none" stroke="#ebcd00" stroke-width="1.2"/>
<line x1="386" y1="540.15" x2="393" y2="540.15" stroke="#ebb000" stroke-width="1.3"/>
<path d="M281.2 549.45 L291.6 541.75 L295.5 540.15" fill="none" stroke="#ebb000" stroke-width="1.2"/>
<text x="277" y="557.35" fill="#ebb000" class="sl" text-anchor="end">4</text>
<line x1="386" y1="565.75" x2="393" y2="565.75" stroke="#eb9300" stroke-width="1.3"/>
<path d="M288.5 569.05 L292.8 566.65 L295.5 565.75" fill="none" stroke="#eb9300" stroke-width="1.2"/>
<line x1="386" y1="591.33" x2="393" y2="591.33" stroke="#eb7500" stroke-width="1.3"/>
<path d="M281.2 600.63 L291.6 592.93 L295.5 591.33" fill="none" stroke="#eb7500" stroke-width="1.2"/>
<text x="277" y="608.53" fill="#eb7500" class="sl" text-anchor="end">6</text>
<line x1="386" y1="616.9" x2="393" y2="616.9" stroke="#eb5800" stroke-width="1.3"/>
<path d="M288.5 620.2 L292.8 617.8 L295.5 616.9" fill="none" stroke="#eb5800" stroke-width="1.2"/>
<line x1="386" y1="642.46" x2="393" y2="642.46" stroke="#eb3b00" stroke-width="1.3"/>
<path d="M281.2 651.76 L291.6 644.06 L295.5 642.46" fill="none" stroke="#eb3b00" stroke-width="1.2"/>
<text x="277" y="659.66" fill="#eb3b00" class="sl" text-anchor="end">8</text>
<line x1="386" y1="668.01" x2="393" y2="668.01" stroke="#eb1d00" stroke-width="1.3"/>
<path d="M288.5 671.31 L292.8 668.91 L295.5 668.01" fill="none" stroke="#eb1d00" stroke-width="1.2"/>
<line x1="386" y1="693.55" x2="393" y2="693.55" stroke="#eb0000" stroke-width="1.3"/>
<path d="M281.2 702.85 L291.6 695.15 L295.5 693.55" fill="none" stroke="#eb0000" stroke-width="1.2"/>
<text x="277" y="710.75" fill="#eb0000" class="sl" text-anchor="end">10</text>
<line x1="386" y1="719.1" x2="393" y2="719.1" stroke="#eb0015" stroke-width="1.3"/>
<path d="M288.5 722.4 L292.8 720 L295.5 719.1" fill="none" stroke="#eb0015" stroke-width="1.2"/>
<line x1="386" y1="744.64" x2="393" y2="744.64" stroke="#eb002b" stroke-width="1.3"/>
<path d="M281.2 753.94 L291.6 746.24 L295.5 744.64" fill="none" stroke="#eb002b" stroke-width="1.2"/>
<text x="277" y="761.84" fill="#eb002b" class="sl" text-anchor="end">12</text>
<line x1="386" y1="770.18" x2="393" y2="770.18" stroke="#eb0040" stroke-width="1.3"/>
<path d="M288.5 773.48 L292.8 771.08 L295.5 770.18" fill="none" stroke="#eb0040" stroke-width="1.2"/>
<line x1="386" y1="795.71" x2="393" y2="795.71" stroke="#eb0055" stroke-width="1.3"/>
<path d="M281.2 805.01 L291.6 797.31 L295.5 795.71" fill="none" stroke="#eb0055" stroke-width="1.2"/>
<text x="277" y="812.91" fill="#eb0055" class="sl" text-anchor="end">14</text>
<line x1="386" y1="821.25" x2="393" y2="821.25" stroke="#eb006b" stroke-width="1.3"/>
<path d="M288.5 824.55 L292.8 822.15 L295.5 821.25" fill="none" stroke="#eb006b" stroke-width="1.2"/>
<line x1="386" y1="846.79" x2="393" y2="846.79" stroke="#eb0080" stroke-width="1.3"/>
<path d="M281.2 856.09 L291.6 848.39 L295.5 846.79" fill="none" stroke="#eb0080" stroke-width="1.2"/>
<text x="277" y="863.99" fill="#eb0080" class="sl" text-anchor="end">16</text>
<line x1="295.5" y1="246.4" x2="393" y2="246.4" stroke="#009090" stroke-width="1.3"/>
<line x1="295.5" y1="414.4" x2="386.5" y2="414.4" stroke="#ff0000" stroke-width="1.5"/>
<line x1="295.5" y1="462.5" x2="386.5" y2="462.5" stroke="#ff0000" stroke-width="1.5"/>
<line x1="343.4" y1="404" x2="343.4" y2="470" stroke="#f0f0f0" stroke-width="1.2"/>
<line x1="280" y1="438.4" x2="295.5" y2="438.4" stroke="#ffffff" stroke-width="1.5"/>
<line x1="295.5" y1="438.4" x2="382" y2="438.4" stroke="#00ff00" stroke-width="1.5"/>
<path d="M380 431.4L393 438.4L380 445.4Z" fill="#00ff00"/>
<text x="276.7" y="444.9" fill="#ffffff" text-anchor="end" textLength="31.5" lengthAdjust="spacing">0.34</text>
</svg></div></body></html>
